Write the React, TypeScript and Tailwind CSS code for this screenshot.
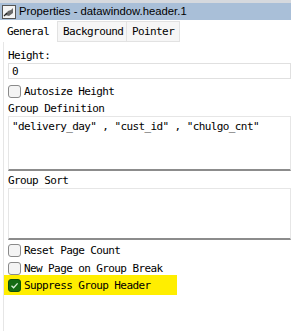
import React from "react";

const mono = { fontFamily: '"DejaVu Sans Mono", "Liberation Mono", monospace' };
const txt = "text-[11px] tracking-[-0.6px] text-black";

function Box({ checked }: { checked?: boolean }) {
  if (checked) {
    return (
      <span className="w-[13px] h-[13px] rounded-[3px] bg-[#136b13] border border-[#0d4d0d] flex items-center justify-center shrink-0">
        <svg width="9" height="9" viewBox="0 0 9 9">
          <path d="M1.5 4.8 L3.6 6.8 L7.6 2.4" fill="none" stroke="#d8f0d8" strokeWidth="1.3" />
        </svg>
      </span>
    );
  }
  return <span className="w-[13px] h-[13px] rounded-[3px] bg-[#f4f4f4] border border-[#8a8a8a] shrink-0" />;
}

function Check({ label, checked }: { label: string; checked?: boolean }) {
  return (
    <div className="flex items-center gap-[3px] h-[18px]">
      <Box checked={checked} />
      <span className={`${txt} leading-none`} style={mono}>{label}</span>
    </div>
  );
}

function Label({ children }: { children: React.ReactNode }) {
  return (
    <div className={`${txt} leading-[15px] h-[15px]`} style={mono}>{children}</div>
  );
}

export default function App() {
  return (
    <div className="w-[291px] h-[331px] bg-white overflow-hidden">
      <div className="h-[3px] bg-[#d6d9de]" />
      <div className="h-[17px] bg-[#a9bfd8] flex items-center pl-[2px] gap-[3px]">
        <svg width="14" height="14" viewBox="0 0 14 14">
          <rect x="0.5" y="0.5" width="13" height="13" fill="#f4f4f4" stroke="#555" />
          <path d="M3 10 L6 6 L9 5 L11 3 L11 8 L7 11 Z" fill="#6a6a6a" />
          <path d="M2 11 L5 8" stroke="#222" strokeWidth="1.2" />
        </svg>
        <span className="text-[11.3px] leading-none text-black" style={{ fontFamily: '"Liberation Sans", Arial, sans-serif' }}>
          Properties - datawindow.header.1
        </span>
      </div>
      <div className="flex h-[22px] items-end bg-white">
        <div className={`h-[22px] w-[57px] bg-white flex items-center pl-[7px] ${txt} leading-none`} style={mono}>General</div>
        <div className={`h-[21px] w-[70px] bg-[#f6f6f6] border border-[#e2e2e2] flex items-center pl-[5px] ${txt} leading-none`} style={mono}>Background</div>
        <div className={`h-[21px] w-[53px] bg-[#f6f6f6] border border-l-0 border-[#e2e2e2] flex items-center pl-[5px] ${txt} leading-none`} style={mono}>Pointer</div>
      </div>
      <div className="border-l border-[#e6e6e6] ml-[3px] pl-[4px] pt-[6px] h-[289px] flex flex-col">
        <Label>Height:</Label>
        <div className={`h-[16px] border border-[#e0e0e0] flex items-center pl-[3px] ${txt} leading-none`} style={mono}>0</div>
        <div className="mt-[3px]"><Check label="Autosize Height" /></div>
        <div className="mt-[1px]"><Label>Group Definition</Label></div>
        <div className={`h-[55px] border border-[#e6e6e6] border-b-2 border-b-[#8c8c8c] pl-[3px] pt-[3px] ${txt} leading-[14px]`} style={mono}>
          "delivery_day" , "cust_id" , "chulgo_cnt"
        </div>
        <div className="mt-[2px]"><Label>Group Sort</Label></div>
        <div className="h-[52px] border border-[#e6e6e6] border-b-2 border-b-[#8c8c8c]" />
        <div className="mt-[1px]"><Check label="Reset Page Count" /></div>
        <Check label="New Page on Group Break" />
        <div className="-mt-[2px] -ml-[4px] pl-[4px] w-[173px] h-[20px] bg-[#ffee00] flex items-center">
          <Check label="Suppress Group Header" checked />
        </div>
      </div>
    </div>
  );
}
